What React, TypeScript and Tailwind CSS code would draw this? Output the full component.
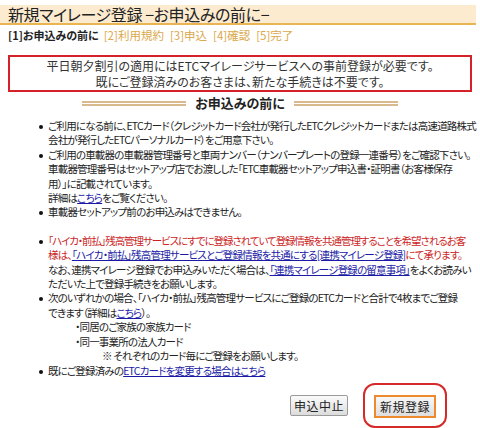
export default function App() {
  const jp = "font-['Noto_Sans_CJK_JP','Noto_Sans',sans-serif] [font-feature-settings:'palt']";
  const Bullet = ({ children, className = "" }: { children: React.ReactNode; className?: string }) => (
    <div className={`flex ${className}`}>
      <div className="w-[9px] shrink-0 pt-[6px]">
        <div className="w-[4px] h-[4px] rounded-full bg-[#111]" />
      </div>
      <div className="whitespace-nowrap">{children}</div>
    </div>
  );
  const Link = ({ children }: { children: React.ReactNode }) => (
    <span className="text-[#1a1aa6] underline">{children}</span>
  );
  return (
    <div className={`w-[480px] h-[428px] overflow-hidden bg-white text-[#222] ${jp}`}>
      <div className="pt-[5px] pr-[4px]">
        <div className="h-[20px] bg-[#fdebd0] border-b-2 border-[#e9b553] pl-[8px] text-[16px] leading-[19px] tracking-[-0.4px] text-[#222]">
          新規マイレージ登録 −お申込みの前に−
        </div>
      </div>
      <div className="mt-[3px] pl-[8px] text-[11px] leading-[14px] whitespace-nowrap flex">
        <span className="font-bold">[1]お申込みの前に</span>
        <span className="text-[#dba84a] ml-[5px] text-[11.5px]">[2]利用規約</span>
        <span className="text-[#dba84a] ml-[6px] text-[11.5px]">[3]申込</span>
        <span className="text-[#dba84a] ml-[6px] text-[11.5px]">[4]確認</span>
        <span className="text-[#dba84a] ml-[6px] text-[11.5px]">[5]完了</span>
      </div>
      <div className="mx-[8px] mt-[13px] border-2 border-[#d4212a] h-[37px] pt-[1px] text-center text-[12px] leading-[15.5px] text-[#333]">
        平日朝夕割引の適用にはETCマイレージサービスへの事前登録が必要です。
        <br />
        既にご登録済みのお客さまは、新たな手続きは不要です。
      </div>
      <div className="mt-[3px] flex items-center justify-center gap-[9px] text-[13px] leading-[16px] font-bold">
        <div className="w-[104px] h-[5px] border-y-2 border-[#d9b98e]" />
        <span>お申込みの前に</span>
        <div className="w-[104px] h-[5px] border-y-2 border-[#d9b98e]" />
      </div>
      <div className="mt-[8px] pl-[39px] text-[10.5px] leading-[14.4px] tracking-[-0.8px]">
        <Bullet>
          ご利用になる前に、ETCカード（クレジットカード会社が発行したETCクレジットカードまたは高速道路株式
          <br />
          会社が発行したETCパーソナルカード）をご用意下さい。
        </Bullet>
        <Bullet>
          ご利用の車載器の車載器管理番号と車両ナンバー（ナンバープレートの登録一連番号）をご確認下さい。
          <br />
          車載器管理番号はセットアップ店でお渡しした「ETC車載器セットアップ申込書・証明書（お客様保存
          <br />
          用）」に記載されています。
          <br />
          詳細は<Link>こちら</Link>をご覧ください。
        </Bullet>
        <Bullet>車載器セットアップ前のお申込みはできません。</Bullet>
        <Bullet className="mt-[14px]">
          <span className="text-[#cc1f1f]">
            <span className="tracking-[-1.05px]">
              「ハイカ・前払」残高管理サービスにすでに登録されていて登録情報を共通管理することを希望されるお客
            </span>
            <br />
            様は、
          </span>
          <Link>「ハイカ・前払」残高管理サービスとご登録情報を共通にする[連携マイレージ登録]</Link>
          <span className="text-[#cc1f1f]">にて承ります。</span>
          <br />
          なお、連携マイレージ登録でお申込みいただく場合は、<Link>「連携マイレージ登録の留意事項」</Link>をよくお読みい
          <br />
          ただいた上で登録手続きをお願いします。
        </Bullet>
        <Bullet>
          次のいずれかの場合、「ハイカ・前払」残高管理サービスにご登録のETCカードと合計で4枚までご登録
          <br />
          できます（詳細は<Link>こちら</Link>）。
          <div className="pl-[27px]">
            ・同居のご家族の家族カード
            <br />
            ・同一事業所の法人カード
            <br />
            <span className="pl-[27px]">※ それぞれのカード毎にご登録をお願いします。</span>
          </div>
        </Bullet>
        <Bullet>
          既にご登録済みの<Link>ETCカードを変更する場合はこちら</Link>
        </Bullet>
      </div>
      <div className="mt-[5px] flex justify-end items-center pr-[33px] gap-[15px]">
        <button className="h-[21px] px-[3px] border border-[#9a9a9a] rounded-[2px] bg-gradient-to-b from-[#fbfbfb] to-[#dcdcdc] text-[12px] leading-[19px] tracking-[0.5px] text-[#222]">
          申込中止
        </button>
        <div className="border-[2.5px] border-[#d42a2a] rounded-[12px] px-[9px] py-[8px]">
          <button className="h-[23px] px-[4px] border-2 border-[#ee8a2e] bg-gradient-to-b from-[#f8f8f8] to-[#dedede] text-[12px] leading-[19px] tracking-[0.5px] text-[#222]">
            新規登録
          </button>
        </div>
      </div>
    </div>
  );
}
